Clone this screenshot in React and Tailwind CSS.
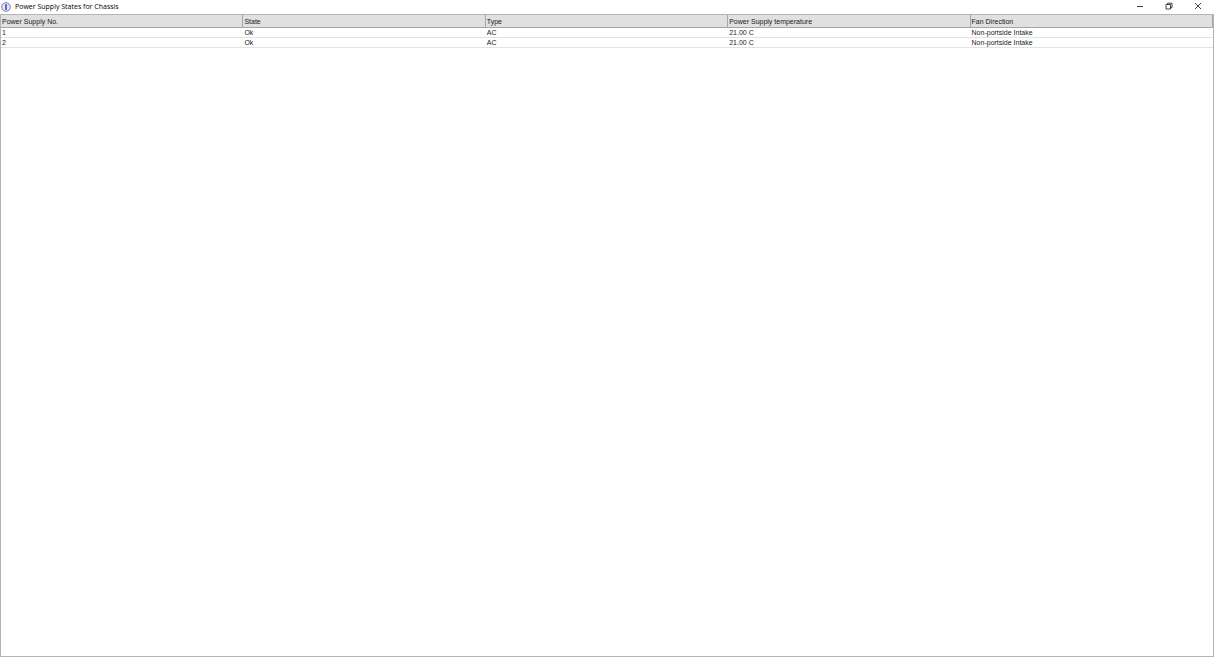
const columns = ['Power Supply No.', 'State', 'Type', 'Power Supply temperature', 'Fan Direction'];

const rows = [
  ['1', 'Ok', 'AC', '21.00 C', 'Non-portside Intake'],
  ['2', 'Ok', 'AC', '21.00 C', 'Non-portside Intake'],
];

function AppIcon() {
  return (
    <svg viewBox="0 0 10 10" className="size-[10px] shrink-0" aria-hidden="true">
      <circle cx="5" cy="5" r="4.3" fill="#e6e6f6" stroke="#7c7bbd" strokeWidth="1" />
      <path d="M5 2.2v5.6" fill="none" stroke="#3f3da0" strokeWidth="1.5" />
      <path d="M4 2.5h2M4 7.5h2" fill="none" stroke="#6c6bb4" strokeWidth="0.6" />
    </svg>
  );
}

function WindowButton({ label, children }) {
  return (
    <button type="button" aria-label={label} className="flex h-[12px] w-[29px] items-center justify-center">
      <svg viewBox="0 0 8 8" className="size-2" fill="none" stroke="#2c2c2c" strokeWidth="0.9" aria-hidden="true">
        {children}
      </svg>
    </button>
  );
}

function TitleBar() {
  return (
    <header className="flex h-[14px] items-start justify-between bg-white pl-px">
      <div className="flex h-[14px] items-center gap-1">
        <AppIcon />
        <h1 className="font-['Open_Sans','Noto_Sans',sans-serif] text-[7px] leading-[14px] text-black">
          Power Supply States for Chassis
        </h1>
      </div>
      <div className="flex items-center pr-0.5">
        <WindowButton label="Minimize">
          <path d="M1 4.5h6" />
        </WindowButton>
        <WindowButton label="Restore">
          <path d="M1 2.5h4.5v4.5h-4.5zM2.5 2.5v-1.3h4.5v4.5h-1.5" />
        </WindowButton>
        <WindowButton label="Close">
          <path d="M1 1l6 6M7 1l-6 6" />
        </WindowButton>
      </div>
    </header>
  );
}

export default function App() {
  return (
    <div className="flex min-h-screen flex-col bg-white">
      <TitleBar />
      <main className="flex-1 border border-[#b4b4b4] bg-white">
        <table className="w-full table-fixed border-separate border-spacing-0 font-['Liberation_Sans',Arial,sans-serif] text-[7px] text-[#1a1a1a]">
          <thead>
            <tr>
              {columns.map((name) => (
                <th
                  key={name}
                  scope="col"
                  className="h-[13px] border-r border-b border-[#a6a6a6] bg-[#e0e0e0] px-px pt-0.5 pb-0 text-left leading-[10px] font-normal"
                >
                  {name}
                </th>
              ))}
            </tr>
          </thead>
          <tbody>
            {rows.map((row) => (
              <tr key={row[0]}>
                {row.map((value, i) => (
                  <td key={columns[i]} className="h-[10px] border-b border-[#e2e2e2] px-px py-0 leading-[9px]">
                    {value}
                  </td>
                ))}
              </tr>
            ))}
          </tbody>
        </table>
      </main>
    </div>
  );
}
